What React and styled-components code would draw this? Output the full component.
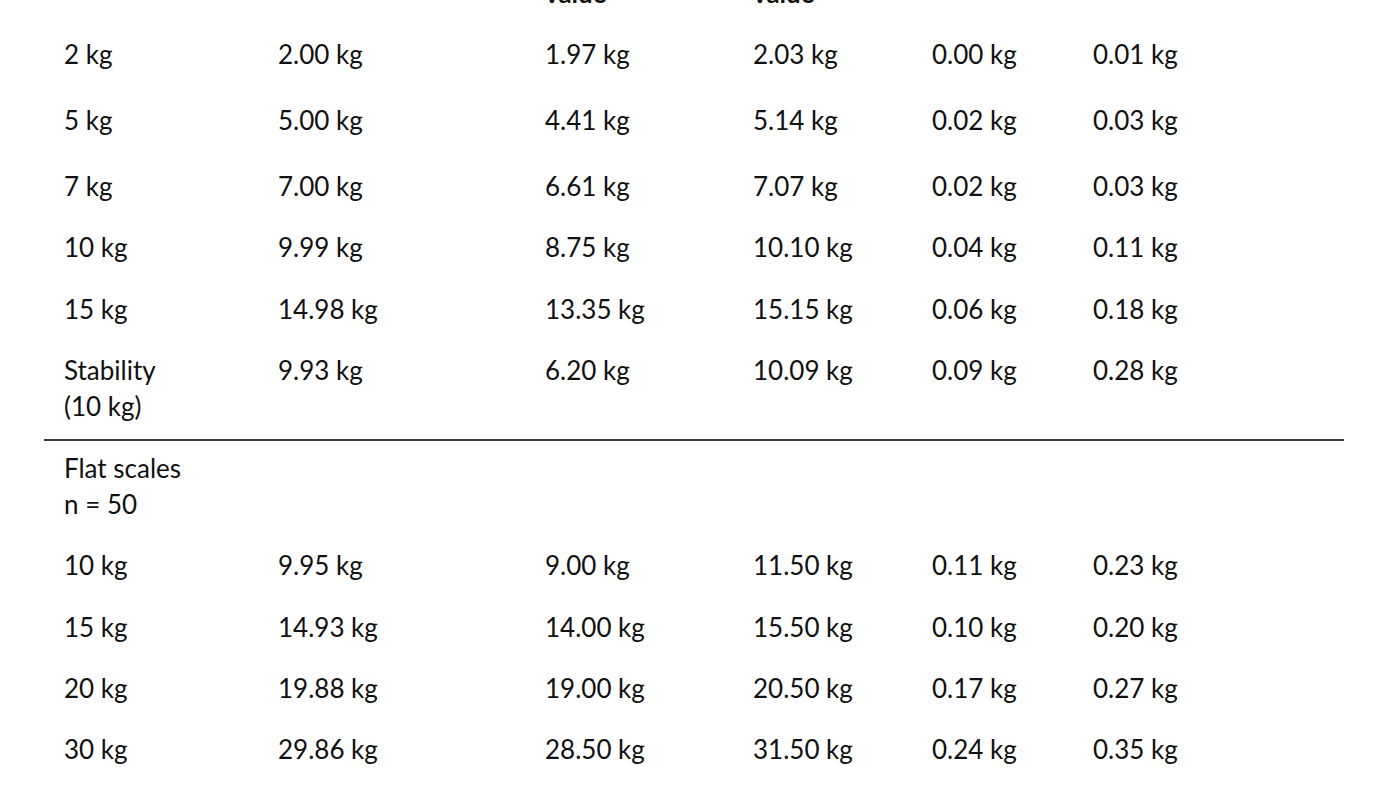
import React from 'react';
import styled, { createGlobalStyle } from 'styled-components';

const pointScales = [
  ['2 kg', '2.00 kg', '1.97 kg', '2.03 kg', '0.00 kg', '0.01 kg', 17],
  ['5 kg', '5.00 kg', '4.41 kg', '5.14 kg', '0.02 kg', '0.03 kg', 17],
  ['7 kg', '7.00 kg', '6.61 kg', '7.07 kg', '0.02 kg', '0.03 kg', 12],
  ['10 kg', '9.99 kg', '8.75 kg', '10.10 kg', '0.04 kg', '0.11 kg', 13],
  ['15 kg', '14.98 kg', '13.35 kg', '15.15 kg', '0.06 kg', '0.18 kg', 12],
];

const flatScales = [
  ['10 kg', '9.95 kg', '9.00 kg', '11.50 kg', '0.11 kg', '0.23 kg', 13],
  ['15 kg', '14.93 kg', '14.00 kg', '15.50 kg', '0.10 kg', '0.20 kg', 12],
  ['20 kg', '19.88 kg', '19.00 kg', '20.50 kg', '0.17 kg', '0.27 kg', 12],
  ['30 kg', '29.86 kg', '28.50 kg', '31.50 kg', '0.24 kg', '0.35 kg', 12],
];

const colWidths = [214, 267, 208, 179, 161, 271];

function DataRow({ row }) {
  const pad = row[6];
  return (
    <tr>
      {row.slice(0, 6).map((v, i) => (
        <Cell key={i} $pb={pad}>
          {v}
        </Cell>
      ))}
    </tr>
  );
}

export default function App() {
  return (
    <>
      <GlobalStyle />
      <Page>
        <Table>
          <colgroup>
            {colWidths.map((w, i) => (
              <col key={i} style={{ width: w }} />
            ))}
          </colgroup>
          <thead>
            <tr>
              <HeadCell>Nominal weight</HeadCell>
              <HeadCell>Mean</HeadCell>
              <HeadCell>
                Minimum
                <br />
                measured
                <br />
                value
              </HeadCell>
              <HeadCell>
                Maximum
                <br />
                measured
                <br />
                value
              </HeadCell>
              <HeadCell>SD</HeadCell>
              <HeadCell>Error</HeadCell>
            </tr>
          </thead>
          <tbody>
            {pointScales.map((r, i) => (
              <DataRow key={i} row={r} />
            ))}
            <tr>
              <Cell $pb={15}>
                Stability
                <br />
                (10 kg)
              </Cell>
              <Cell $pb={15}>9.93 kg</Cell>
              <Cell $pb={15}>6.20 kg</Cell>
              <Cell $pb={15}>10.09 kg</Cell>
              <Cell $pb={15}>0.09 kg</Cell>
              <Cell $pb={15}>0.28 kg</Cell>
            </tr>
            <SectionRow>
              <Cell $pt={9} $pb={12} colSpan={6}>
                Flat scales
                <br />
                n = 50
              </Cell>
            </SectionRow>
            {flatScales.map((r, i) => (
              <DataRow key={i} row={r} />
            ))}
          </tbody>
        </Table>
      </Page>
    </>
  );
}

const GlobalStyle = createGlobalStyle`
  html, body {
    margin: 0;
    padding: 0;
    background: #ffffff;
    overflow: hidden;
  }
  body {
    font-family: Lato, "Open Sans", "Liberation Sans", sans-serif;
    color: #111111;
  }
`;

const Page = styled.div`
  width: 1400px;
  height: 786px;
  overflow: hidden;
`;

const Table = styled.table`
  margin: -109px 0 0 44px;
  width: 1300px;
  table-layout: fixed;
  border-collapse: collapse;
  font-size: 26px;
  line-height: 36px;
`;

const HeadCell = styled.th`
  padding: 12px 0 12px 20px;
  text-align: left;
  vertical-align: top;
  font-weight: 700;
  white-space: nowrap;
  overflow: hidden;
`;

const Cell = styled.td`
  padding: ${({ $pt = 13 }) => $pt}px 0 ${({ $pb = 13 }) => $pb}px 20px;
  text-align: left;
  vertical-align: top;
  white-space: nowrap;
`;

const SectionRow = styled.tr`
  border-top: 2px solid #3c3c3c;
`;
